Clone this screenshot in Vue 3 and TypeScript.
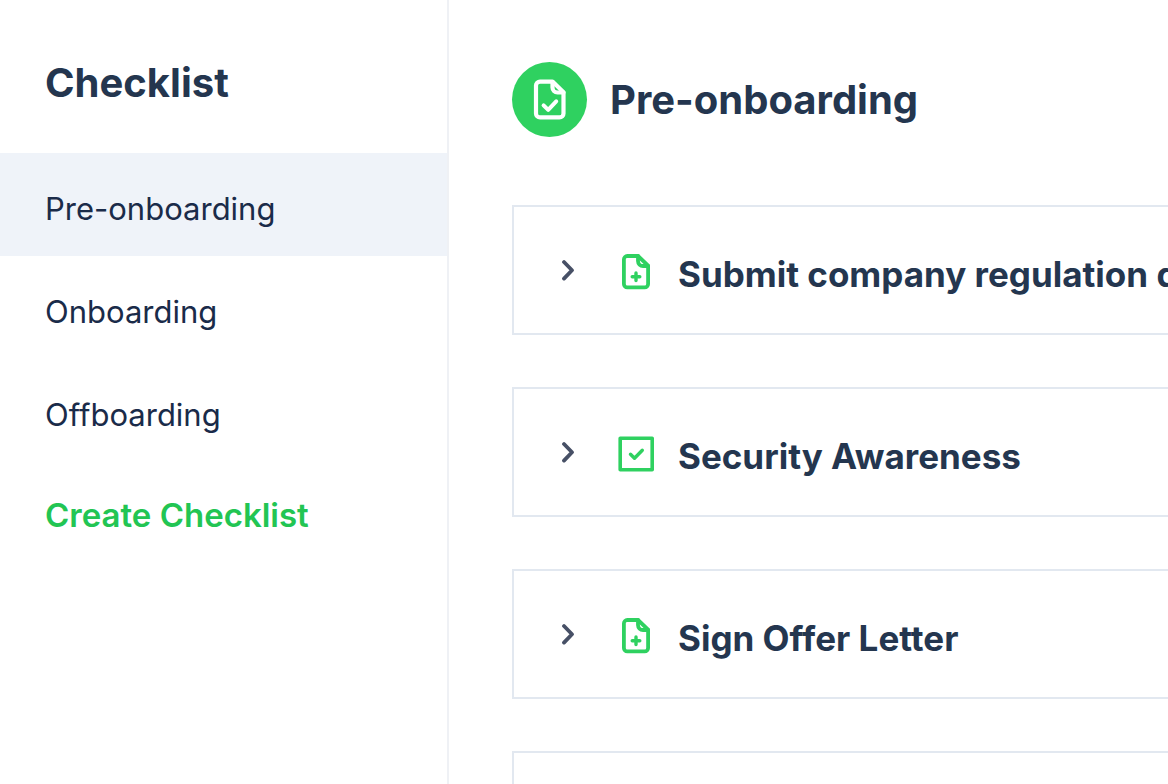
<script setup lang="ts">
import { ref } from 'vue'

interface Task {
  title: string
  icon: 'file' | 'check'
}

const checklists: string[] = ['Pre-onboarding', 'Onboarding', 'Offboarding']
const active = ref('Pre-onboarding')

const tasks: Task[] = [
  { title: 'Submit company regulation document', icon: 'file' },
  { title: 'Security Awareness', icon: 'check' },
  { title: 'Sign Offer Letter', icon: 'file' },
  { title: '', icon: 'file' },
]
</script>

<template>
  <div class="app">
    <aside class="sidebar">
      <h2 class="sidebar-title">Checklist</h2>
      <nav class="nav">
        <a
          v-for="item in checklists"
          :key="item"
          href="#"
          class="nav-item"
          :class="{ active: item === active }"
          @click.prevent="active = item"
        >{{ item }}</a>
      </nav>
      <button type="button" class="create">Create Checklist</button>
    </aside>

    <main class="content">
      <header class="header">
        <span class="badge">
          <svg width="38" height="42" viewBox="0 0 38 42" fill="none" stroke="#fff" stroke-width="4.2" stroke-linejoin="round" stroke-linecap="round">
            <path d="M21.5 2.6H9a4 4 0 0 0-4 4v27.800a4 4 0 0 0 4 4h19.500a4 4 0 0 0 4-4V13.200z" />
            <path d="M21.5 3v5.500a5 5 0 0 0 5 5h6" />
            <path d="M12.600 26.300l4.600 4.600 8-8.600" stroke-width="4" />
          </svg>
        </span>
        <h1 class="title">Pre-onboarding</h1>
      </header>

      <section class="tasks">
        <article v-for="(task, i) in tasks" :key="i" class="task">
          <button type="button" class="expand" aria-label="Expand">
            <svg width="16" height="22" viewBox="0 0 16 22" fill="none" stroke="#475066" stroke-width="3.8" stroke-linecap="round" stroke-linejoin="round">
              <path d="M4 3l8 8.300-8 8.300" />
            </svg>
          </button>
          <svg v-if="task.icon === 'file'" class="icon" width="36" height="36" viewBox="0 0 36 36" fill="none" stroke="#2fd160" stroke-width="3.8" stroke-linejoin="round" stroke-linecap="round">
            <path d="M20 2H9.300a3.400 3.400 0 0 0-3.400 3.400v24.600a3.400 3.400 0 0 0 3.400 3.400h17.400a3.400 3.400 0 0 0 3.400-3.400V11.600z" />
            <path d="M20 2v5a5 5 0 0 0 5 5h5" />
            <path d="M18 19v7.600M14.200 22.800h7.600" stroke-width="3.400" />
          </svg>
          <svg v-else class="icon" width="36" height="36" viewBox="0 0 36 36" fill="none" stroke="#2fd160" stroke-width="3.600" stroke-linejoin="round">
            <path d="M2.200 2.200h32v31.600h-32z" />
            <path d="M12.500 18.200l4 4 7.800-8" stroke-linecap="round" stroke-width="3.400" />
          </svg>
          <h3 class="task-title">{{ task.title }}</h3>
        </article>
      </section>
    </main>
  </div>
</template>

<style>
body {
  background: #fff;
  overflow: hidden;
}
</style>

<style scoped>
.app {
  display: flex;
  height: 100vh;
  overflow: hidden;
  font-family: Inter, "Liberation Sans", sans-serif;
  color: #24364f;
}
.sidebar {
  box-sizing: border-box;
  flex: 0 0 449px;
  border-right: 2px solid #eff1f5;
}
.sidebar-title {
  margin: 0;
  padding: 59px 45px 46px;
  font-size: 40px;
  line-height: 48px;
  font-weight: 700;
}
.nav {
  display: flex;
  flex-direction: column;
}
.nav-item {
  padding: 36px 45px 27px;
  font-size: 31px;
  line-height: 40px;
  color: #1a2b49;
  text-decoration: none;
}
.nav-item.active {
  background: #eff3f9;
}
.create {
  padding: 33px 45px;
  border: 0;
  background: none;
  font: 600 33px/40px Inter, "Liberation Sans", sans-serif;
  color: #22c553;
}
.content {
  flex: 1;
  min-width: 0;
  padding: 62px 0 0 63px;
}
.header {
  display: flex;
  align-items: center;
  gap: 23px;
}
.badge {
  display: flex;
  align-items: center;
  justify-content: center;
  width: 75px;
  height: 75px;
  border-radius: 50%;
  background: #2fd160;
}
.title {
  margin: 0;
  font-size: 40px;
  line-height: 48px;
  font-weight: 700;
}
.tasks {
  display: flex;
  flex-direction: column;
  gap: 52px;
  margin-top: 68px;
}
.task {
  display: flex;
  align-items: center;
  box-sizing: border-box;
  height: 130px;
  padding-left: 46px;
  border: 2px solid #e2e8f0;
  border-right: 0;
}
.expand {
  display: flex;
  padding: 0;
  border: 0;
  background: none;
}
.icon {
  flex: none;
  margin: 4px 24px 0 42px;
}
.task-title {
  margin: 0;
  padding-top: 8px;
  font-size: 35px;
  line-height: 44px;
  font-weight: 700;
  white-space: nowrap;
}
</style>
